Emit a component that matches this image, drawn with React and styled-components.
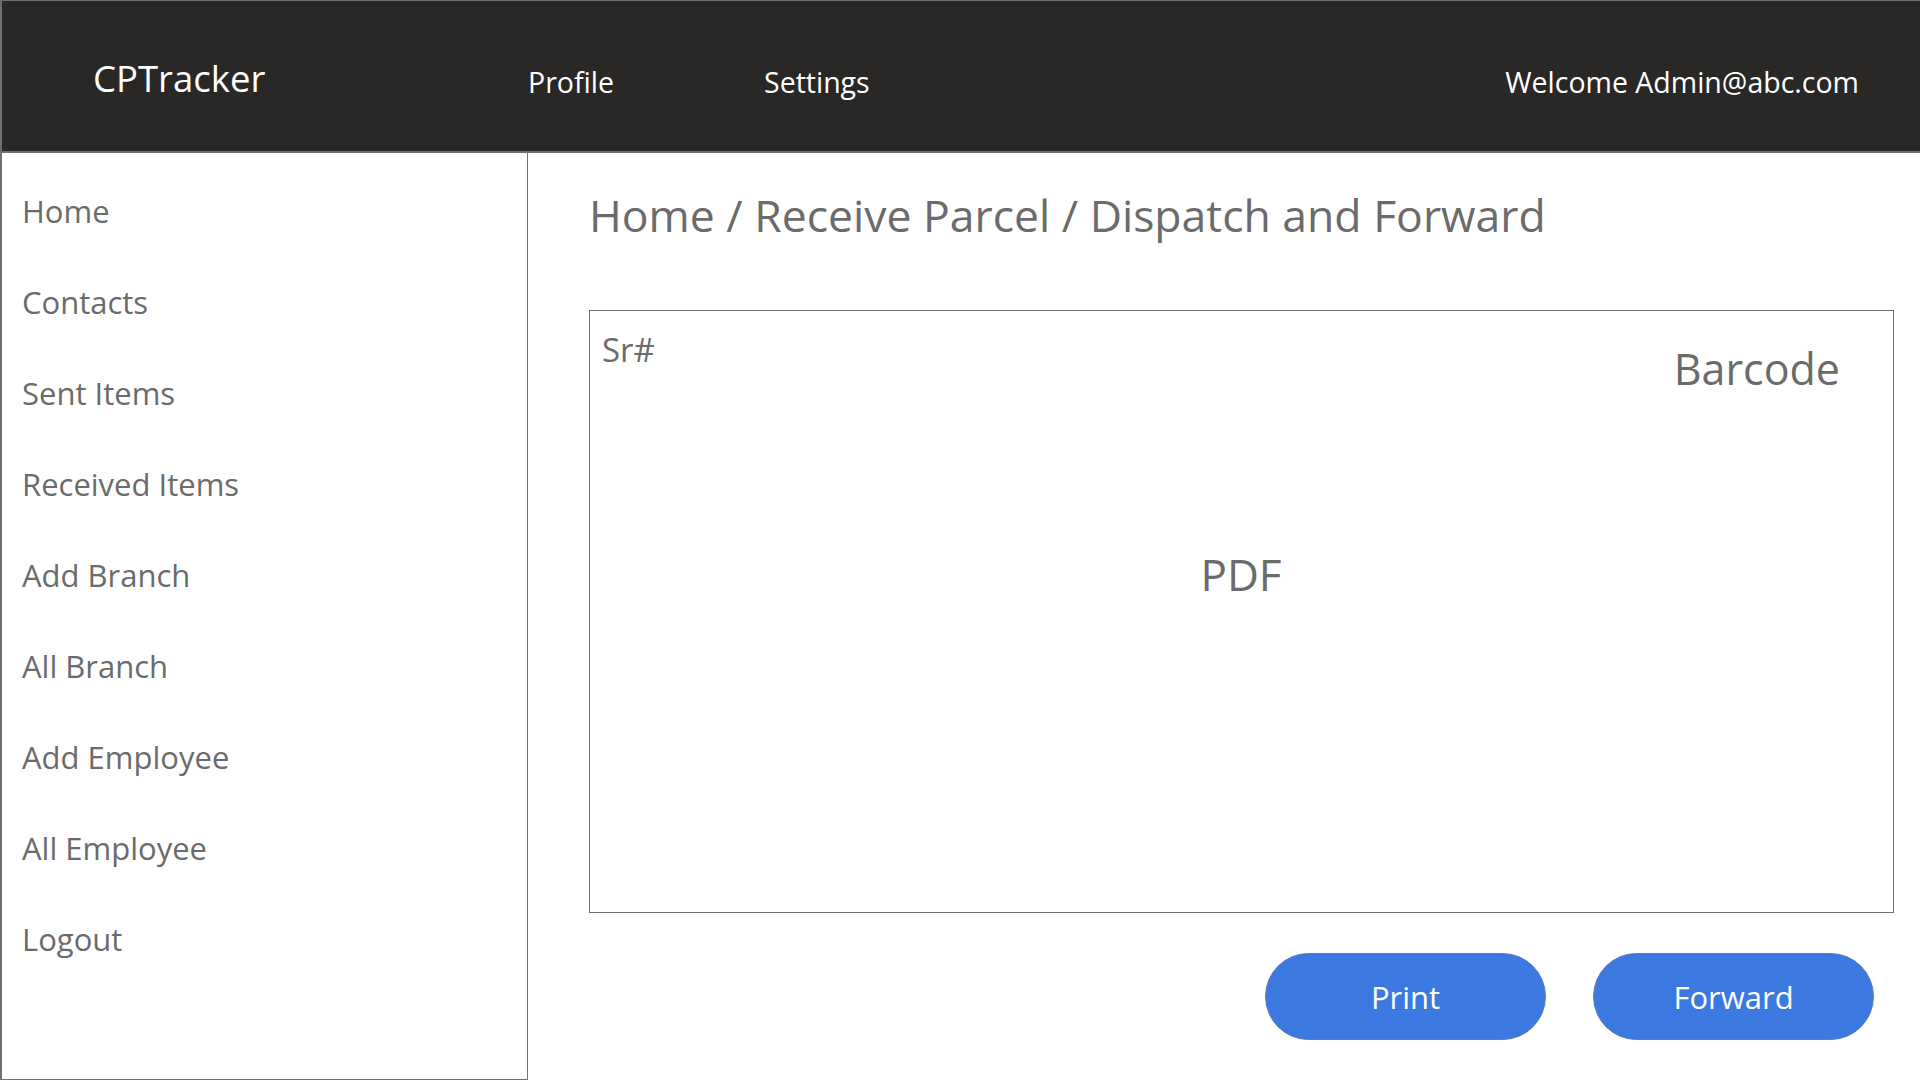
import React from 'react';
import styled, { createGlobalStyle } from 'styled-components';

const GlobalStyle = createGlobalStyle`
  * { box-sizing: border-box; }
  body {
    margin: 0;
    font-family: "Open Sans", "Noto Sans", sans-serif;
    background: #ffffff;
  }
`;

const Page = styled.div`
  height: 100vh;
  display: flex;
  flex-direction: column;
  border-left: 2px solid #6f6f6f;
  border-top: 1px solid #6f6f6f;
`;

const Header = styled.header`
  height: 152px;
  flex-shrink: 0;
  background: #292826;
  display: flex;
  align-items: center;
  color: #ffffff;
  border-bottom: 2px solid #6f6f6f;
`;

const Brand = styled.div`
  width: 526px;
  padding-left: 91px;
  margin-top: 4px;
  font-size: 36.5px;
`;

const NavLink = styled.a`
  width: 236px;
  margin-top: 12px;
  font-size: 28.5px;
  color: #ffffff;
  text-decoration: none;
`;

const Welcome = styled.div`
  margin-left: auto;
  margin-top: 12px;
  padding-right: 61px;
  font-size: 28.5px;
`;

const Body = styled.div`
  flex: 1;
  display: flex;
  min-height: 0;
`;

const Sidebar = styled.nav`
  width: 526px;
  flex-shrink: 0;
  border-right: 1px solid #6f6f6f;
  border-bottom: 1px solid #6f6f6f;
  padding-top: 13px;
  display: flex;
  flex-direction: column;
`;

const SideItem = styled.a`
  height: 91px;
  line-height: 91px;
  padding-left: 20px;
  font-size: 31px;
  color: #6b6b6b;
  text-decoration: none;
`;

const Main = styled.main`
  flex: 1;
  padding: 34px 26px 0 61px;
  display: flex;
  flex-direction: column;
`;

const Breadcrumb = styled.h1`
  margin: 0;
  font-weight: 400;
  font-size: 44.5px;
  line-height: 56px;
  color: #6b6b6b;
`;

const Panel = styled.section`
  margin-top: 67px;
  height: 603px;
  border: 1px solid #6f6f6f;
  padding: 19px 53px 0 12px;
  display: grid;
  grid-template-columns: 1fr auto;
  grid-template-rows: auto 1fr;
  color: #6b6b6b;
`;

const SerialLabel = styled.div`
  font-size: 33px;
  line-height: 40px;
`;

const BarcodeLabel = styled.div`
  margin-top: 12px;
  font-size: 43px;
  line-height: 54px;
`;

const PdfLabel = styled.div`
  grid-column: 1 / span 2;
  justify-self: center;
  align-self: start;
  margin-top: 150px;
  padding-left: 40px;
  font-size: 44px;
  line-height: 56px;
`;

const Actions = styled.div`
  margin-top: 40px;
  display: flex;
  justify-content: flex-end;
  gap: 47px;
  padding-right: 20px;
`;

const ActionButton = styled.button`
  width: 281px;
  height: 87px;
  border-radius: 44px;
  border: 1px solid #5d7cb8;
  background: #3b78e0;
  color: #ffffff;
  font-family: inherit;
  font-size: 31px;
  cursor: pointer;
`;

const menu = [
  'Home',
  'Contacts',
  'Sent Items',
  'Received Items',
  'Add Branch',
  'All Branch',
  'Add Employee',
  'All Employee',
  'Logout',
];

export default function App() {
  return (
    <>
      <GlobalStyle />
      <Page>
        <Header>
          <Brand>CPTracker</Brand>
          <NavLink href="#">Profile</NavLink>
          <NavLink href="#">Settings</NavLink>
          <Welcome>Welcome Admin@abc.com</Welcome>
        </Header>
        <Body>
          <Sidebar>
            {menu.map((item) => (
              <SideItem key={item} href="#">{item}</SideItem>
            ))}
          </Sidebar>
          <Main>
            <Breadcrumb>Home / Receive Parcel / Dispatch and Forward</Breadcrumb>
            <Panel>
              <SerialLabel>Sr#</SerialLabel>
              <BarcodeLabel>Barcode</BarcodeLabel>
              <PdfLabel>PDF</PdfLabel>
            </Panel>
            <Actions>
              <ActionButton>Print</ActionButton>
              <ActionButton>Forward</ActionButton>
            </Actions>
          </Main>
        </Body>
      </Page>
    </>
  );
}
